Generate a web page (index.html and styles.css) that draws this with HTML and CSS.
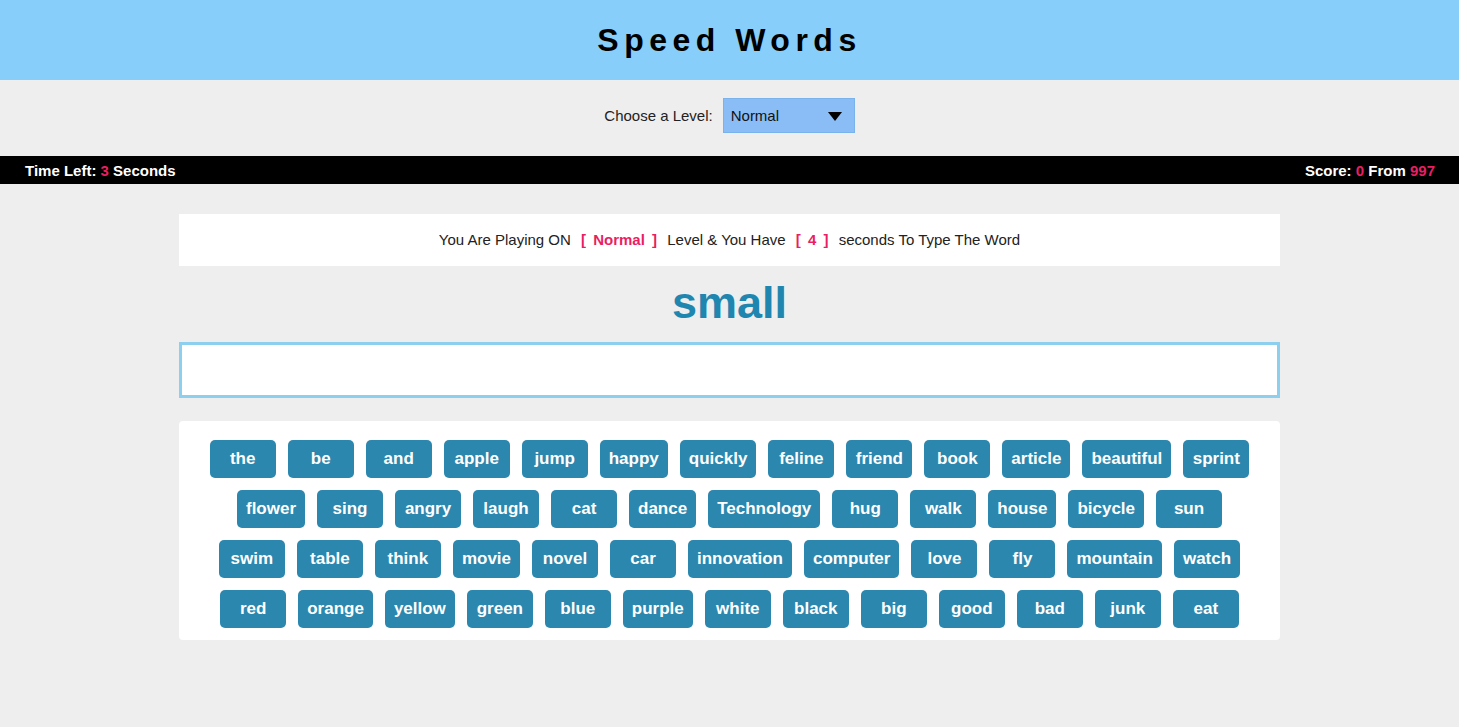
FILE: index.html
```html
<!DOCTYPE html>
<html lang="en">
<head>
<meta charset="utf-8">
<title>Speed Words</title>
<link rel="stylesheet" href="styles.css">
</head>
<body>
  <header class="header">
    <h1 class="title">Speed Words</h1>
  </header>
  <div class="level-row">
    <label class="level-label" for="lvl">Choose a Level:</label>
    <div class="select-wrap">
      <select id="lvl" class="level-select">
        <option>Easy</option>
        <option selected>Normal</option>
        <option>Hard</option>
      </select>
      <span class="select-arrow"></span>
    </div>
  </div>
  <div class="status-bar">
    <div class="time">Time Left: <span class="red">3</span> Seconds</div>
    <div class="score">Score: <span class="red">0</span> From <span class="red">997</span></div>
  </div>
  <main class="game">
    <div class="message">You Are Playing ON <span class="tag">[ Normal ]</span> Level &amp; You Have <span class="tag">[ 4 ]</span> seconds To Type The Word</div>
    <div class="the-word">small</div>
    <input class="word-input" type="text">
    <div class="upcoming">
      <span class="w">the</span><span class="w">be</span><span class="w">and</span><span class="w">apple</span><span class="w">jump</span><span class="w">happy</span><span class="w">quickly</span><span class="w">feline</span><span class="w">friend</span><span class="w">book</span><span class="w">article</span><span class="w">beautiful</span><span class="w">sprint</span>
      <span class="w">flower</span><span class="w">sing</span><span class="w">angry</span><span class="w">laugh</span><span class="w">cat</span><span class="w">dance</span><span class="w">Technology</span><span class="w">hug</span><span class="w">walk</span><span class="w">house</span><span class="w">bicycle</span><span class="w">sun</span>
      <span class="w">swim</span><span class="w">table</span><span class="w">think</span><span class="w">movie</span><span class="w">novel</span><span class="w">car</span><span class="w">innovation</span><span class="w">computer</span><span class="w">love</span><span class="w">fly</span><span class="w">mountain</span><span class="w">watch</span>
      <span class="w">red</span><span class="w">orange</span><span class="w">yellow</span><span class="w">green</span><span class="w">blue</span><span class="w">purple</span><span class="w">white</span><span class="w">black</span><span class="w">big</span><span class="w">good</span><span class="w">bad</span><span class="w">junk</span><span class="w">eat</span>
    </div>
  </main>
</body>
</html>
```

FILE: styles.css
```css
* { box-sizing: border-box; }

body {
  margin: 0;
  background: #eeeeee;
  font-family: "Liberation Sans", Arial, sans-serif;
  color: #222;
}

.header {
  background: #87cefa;
  height: 80px;
  display: flex;
  align-items: center;
  justify-content: center;
}

.title {
  margin: 0;
  font-size: 32px;
  font-weight: bold;
  letter-spacing: 5.5px;
  color: #000;
}

.level-row {
  display: flex;
  align-items: center;
  justify-content: center;
  gap: 10px;
  padding: 18px 0 23px;
  font-size: 15px;
}

.level-label { color: #222; }

.select-wrap {
  position: relative;
  width: 132px;
  height: 35px;
}

.level-select {
  appearance: none;
  -webkit-appearance: none;
  width: 100%;
  height: 100%;
  background: #8abcf6;
  border: 1px solid #7ab2ec;
  border-radius: 0;
  font-family: "Liberation Sans", Arial, sans-serif;
  font-size: 15px;
  color: #111;
  padding: 0 7px;
  outline: none;
}

.select-arrow {
  position: absolute;
  right: 13px;
  top: 14px;
  width: 0;
  height: 0;
  border-left: 7.5px solid transparent;
  border-right: 7.5px solid transparent;
  border-top: 9px solid #000;
  pointer-events: none;
}

.status-bar {
  background: #000;
  color: #fff;
  height: 28px;
  display: flex;
  align-items: center;
  justify-content: space-between;
  padding: 0 24px 0 25px;
  font-size: 15px;
  font-weight: bold;
}

.red { color: #e91e63; }

.game {
  width: 1101px;
  margin: 30px auto 0;
}

.message {
  background: #fff;
  height: 52px;
  line-height: 52px;
  text-align: center;
  font-size: 15px;
  color: #222;
}

.tag {
  color: #e91e63;
  font-weight: bold;
  margin: 0 6px;
  word-spacing: 3px;
}

.the-word {
  text-align: center;
  font-size: 45px;
  font-weight: bold;
  color: #1f86b0;
  line-height: 1;
  padding-top: 14px;
  height: 76px;
}

.word-input {
  display: block;
  width: 100%;
  height: 56px;
  margin: 0;
  border: 3px solid #8dcfee;
  background: #fff;
  outline: none;
  font-size: 18px;
}

.upcoming {
  background: #fff;
  border-radius: 4px;
  margin-top: 23px;
  padding: 13px 20px 6px;
  display: flex;
  flex-wrap: wrap;
  justify-content: center;
}

.w {
  background: #2b87ae;
  color: #fff;
  font-weight: bold;
  font-size: 17px;
  height: 38px;
  min-width: 66px;
  padding: 0 9px;
  margin: 6px;
  border-radius: 5px;
  display: flex;
  align-items: center;
  justify-content: center;
}
```
